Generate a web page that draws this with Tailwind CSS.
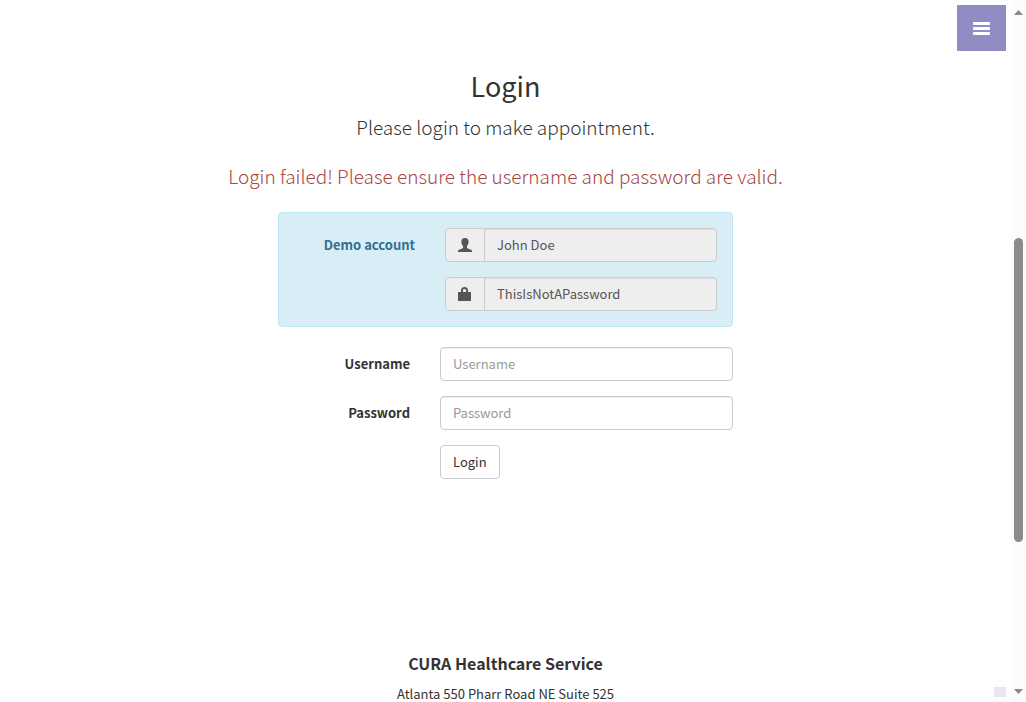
<!DOCTYPE html>
<html lang="en">
<head>
<meta charset="utf-8">
<meta name="viewport" content="width=device-width, initial-scale=1">
<title>CURA Healthcare Service</title>
<script src="https://cdn.jsdelivr.net/npm/@tailwindcss/browser@4"></script>
</head>
<body class="flex min-h-screen bg-white font-['Noto_Sans_CJK_SC','Noto_Sans',sans-serif] text-[13px] leading-5 text-[#333]">
<main class="min-w-0 flex-1">
  <section class="mx-auto max-w-[970px] px-4 pt-[69px]">
    <header class="text-center">
      <h2 class="text-[27px] leading-[33px]">Login</h2>
      <p class="mt-[10px] text-[19px] leading-[29px] font-light">Please login to make appointment.</p>
      <p class="mt-5 text-[19px] leading-[29px] font-light text-[#a94442]">Login failed! Please ensure the username and password are valid.</p>
    </header>
    <form class="mx-auto mt-[22px] max-w-[455px]">
      <div class="flex rounded border border-[#bce8f1] bg-[#d9edf7] p-[15px]">
        <label for="demo-user" class="w-[121px] shrink-0 pt-[7px] text-right font-bold text-[#31708f]">Demo account</label>
        <div class="ml-[30px] flex min-w-0 flex-1 flex-col gap-[15px]">
          <div class="flex h-[34px] rounded border border-[#ccc] bg-[#eee] text-[#555]">
            <span class="flex w-[39px] shrink-0 items-center justify-center border-r border-[#ccc]">
              <svg class="h-[14px] w-[14px]" viewBox="0 0 14 14" fill="currentColor" aria-hidden="true"><path d="M7 0C4.600 0 3.400 1.500 3.400 3.500c0 1.900.7 3.600 1.700 4.600v1.300c0 .5-.3.800-.8 1L1 11.800c-.6.300-1 .8-1 1.300v.9h14v-.9c0-.5-.4-1-1-1.300l-3.300-1.400c-.5-.2-.8-.5-.8-1V8.100c1-1 1.700-2.700 1.700-4.600C10.600 1.500 9.400 0 7 0z"/></svg>
            </span>
            <input id="demo-user" type="text" readonly value="John Doe" class="min-w-0 flex-1 rounded-r-[3px] px-3 shadow-[inset_0_1px_1px_rgba(0,0,0,0.075)] outline-none">
          </div>
          <div class="flex h-[34px] rounded border border-[#ccc] bg-[#eee] text-[#555]">
            <span class="flex w-[39px] shrink-0 items-center justify-center border-r border-[#ccc]">
              <svg class="h-[14px] w-[14px]" viewBox="0 0 14 14" fill="currentColor" aria-hidden="true"><path fill-rule="evenodd" d="M3 5V3.500C3 1.500 4.300 0 6.500 0S10 1.500 10 3.500V5h2.500c.3 0 .5.200.5.500v8c0 .3-.2.500-.5.500H.5c-.3 0-.5-.2-.5-.5v-8C0 5.200.2 5 .5 5zm2 0h3V3.500C8 2.500 7.400 2 6.500 2S5 2.500 5 3.500z"/></svg>
            </span>
            <input aria-label="Demo password" type="text" readonly value="ThisIsNotAPassword" class="min-w-0 flex-1 rounded-r-[3px] px-3 shadow-[inset_0_1px_1px_rgba(0,0,0,0.075)] outline-none">
          </div>
        </div>
      </div>
      <div class="mt-5 flex">
        <label for="username" class="w-[132px] shrink-0 pt-[7px] text-right font-bold">Username</label>
        <input id="username" type="text" placeholder="Username" class="ml-[30px] h-[34px] min-w-0 flex-1 rounded border border-[#ccc] px-3 pb-0.5 text-[#555] shadow-[inset_0_1px_1px_rgba(0,0,0,0.075)] placeholder:text-[#999]">
      </div>
      <div class="mt-[15px] flex">
        <label for="password" class="w-[132px] shrink-0 pt-[7px] text-right font-bold">Password</label>
        <input id="password" type="password" placeholder="Password" class="ml-[30px] h-[34px] min-w-0 flex-1 rounded border border-[#ccc] px-3 pb-0.5 text-[#555] shadow-[inset_0_1px_1px_rgba(0,0,0,0.075)] placeholder:text-[#999]">
      </div>
      <button type="submit" class="mt-[15px] ml-[162px] block h-[34px] rounded border border-[#ccc] bg-white px-3">Login</button>
    </form>
  </section>
  <footer class="mt-[174px] text-center">
    <h4 class="text-[16px] leading-5 font-bold">CURA Healthcare Service</h4>
    <p class="mt-[11px]">Atlanta 550 Pharr Road NE Suite 525</p>
  </footer>
</main>
<button type="button" aria-label="Toggle menu" class="fixed top-[5px] right-5 flex h-[46px] w-[49px] items-center justify-center bg-[#918dc4] text-white">
  <svg class="h-[13px] w-[17px]" viewBox="0 0 17 13" fill="currentColor" aria-hidden="true"><rect width="17" height="3" rx="0.700"/><rect y="5" width="17" height="3" rx="0.700"/><rect y="10" width="17" height="3" rx="0.700"/></svg>
</button>
<a href="#top" aria-label="Back to top" class="fixed right-5 bottom-[5px] h-[10px] w-3 bg-[#e8e7f2]"></a>
<div aria-hidden="true" class="flex w-[15px] shrink-0 flex-col items-center bg-[#fcfcfc]">
  <svg class="mt-[10px] h-[5px] w-[9px]" viewBox="0 0 9 5" fill="#8b8b8b"><path d="M4.500 0 9 5H0z"/></svg>
  <span class="mt-[223px] h-[304px] w-[9px] rounded-full bg-[#8b8b8b]"></span>
  <svg class="mt-auto mb-[10px] h-[5px] w-[9px]" viewBox="0 0 9 5" fill="#8b8b8b"><path d="M0 0h9L4.500 5z"/></svg>
</div>
</body>
</html>
